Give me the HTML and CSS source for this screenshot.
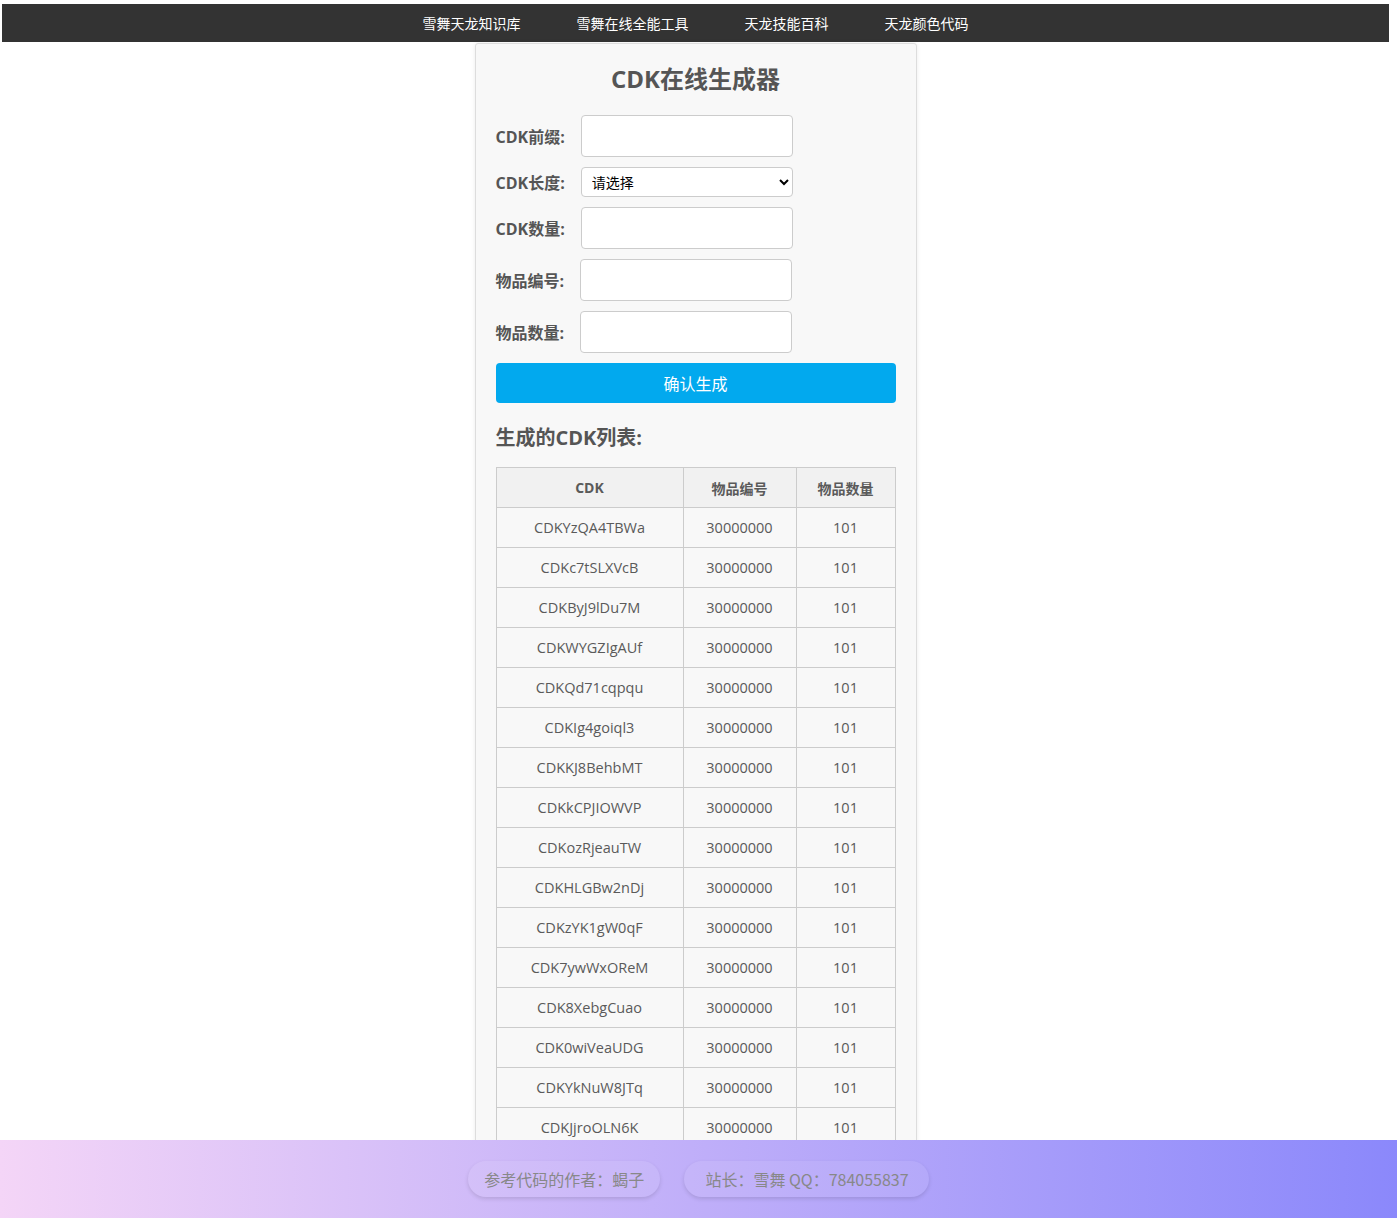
FILE: index.html
```html
<!DOCTYPE html>
<html lang="zh-CN">
<head>
    <meta charset="UTF-8">
    <title>CDK在线生成器</title>
    <link rel="stylesheet" href="styles.css">
</head>
<body>
  <nav class="topnav">
    <a href="#">雪舞天龙知识库</a>
    <a href="#">雪舞在线全能工具</a>
    <a href="#">天龙技能百科</a>
    <a href="#">天龙颜色代码</a>
  </nav>

  <div class="wrap">
    <div class="box">
      <h1>CDK在线生成器</h1>

      <form action="">
        <div class="row">
          <label for="prefix">CDK前缀:</label>
          <input type="text" id="prefix">
        </div>
        <div class="row">
          <label for="len">CDK长度:</label>
          <select id="len" class="sel">
            <option>请选择</option>
            <option>8</option>
            <option>10</option>
            <option>12</option>
          </select>
        </div>
        <div class="row">
          <label for="num">CDK数量:</label>
          <input type="text" id="num">
        </div>
        <div class="row">
          <label for="itemid">物品编号:</label>
          <input type="text" id="itemid">
        </div>
        <div class="row">
          <label for="itemnum">物品数量:</label>
          <input type="text" id="itemnum">
        </div>
        <button type="button" class="btn">确认生成</button>
      </form>

      <h2>生成的CDK列表:</h2>
      <table class="list">
        <thead>
          <tr><th class="c1">CDK</th><th class="c2">物品编号</th><th>物品数量</th></tr>
        </thead>
        <tbody>
          <tr><td>CDKYzQA4TBWa</td><td>30000000</td><td>101</td></tr>
          <tr><td>CDKc7tSLXVcB</td><td>30000000</td><td>101</td></tr>
          <tr><td>CDKByJ9lDu7M</td><td>30000000</td><td>101</td></tr>
          <tr><td>CDKWYGZIgAUf</td><td>30000000</td><td>101</td></tr>
          <tr><td>CDKQd71cqpqu</td><td>30000000</td><td>101</td></tr>
          <tr><td>CDKIg4goiql3</td><td>30000000</td><td>101</td></tr>
          <tr><td>CDKKJ8BehbMT</td><td>30000000</td><td>101</td></tr>
          <tr><td>CDKkCPJIOWVP</td><td>30000000</td><td>101</td></tr>
          <tr><td>CDKozRjeauTW</td><td>30000000</td><td>101</td></tr>
          <tr><td>CDKHLGBw2nDj</td><td>30000000</td><td>101</td></tr>
          <tr><td>CDKzYK1gW0qF</td><td>30000000</td><td>101</td></tr>
          <tr><td>CDK7ywWxOReM</td><td>30000000</td><td>101</td></tr>
          <tr><td>CDK8XebgCuao</td><td>30000000</td><td>101</td></tr>
          <tr><td>CDK0wiVeaUDG</td><td>30000000</td><td>101</td></tr>
          <tr><td>CDKYkNuW8JTq</td><td>30000000</td><td>101</td></tr>
          <tr><td>CDKJjroOLN6K</td><td>30000000</td><td>101</td></tr>
        </tbody>
      </table>
    </div>
  </div>

  <footer class="foot">
    <span class="pill">参考代码的作者：蝎子</span>
    <span class="pill pill-qq">站长：雪舞 QQ：784055837</span>
  </footer>
</body>
</html>
```

FILE: styles.css
```css
body{
  margin: 0;
  font-family: "Open Sans", "Noto Sans CJK SC", sans-serif;
  color: #555;
  background: #fff;
}
.topnav{
  margin: 4px 8px 0 2px;
  height: 38px;
  background-color: #333;
  display: flex;
  justify-content: center;
  align-items: center;
}
.topnav a{
  color: #fff;
  text-decoration: none;
  font-size: 14px;
  padding: 0 28px;
  font-family: "Noto Sans CJK SC", sans-serif;
}
.wrap{
  margin: 0 8px 0 2px;
}
.box{
  width: 400px;
  margin: 1px auto 0;
  padding: 19px 20px 100px;
  background-color: #f8f8f8;
  border: 1px solid #ddd;
  border-radius: 3px;
  box-shadow: 0 0 4px rgba(0,0,0,0.08);
}
h1{
  margin: 0 0 20px;
  font-size: 24px;
  line-height: 32px;
  text-align: center;
  color: #555;
}
.row{
  display: flex;
  align-items: center;
  gap: 16px;
  margin-bottom: 10px;
}
.row label{
  font-size: 16px;
  font-weight: bold;
  color: #555;
}
.row input{
  box-sizing: border-box;
  width: 212px;
  height: 42px;
  padding: 8px;
  border: 1px solid #ccc;
  border-radius: 4px;
  background: #fff;
}
.sel{
  box-sizing: border-box;
  width: 212px;
  height: 30px;
  padding: 0 6px;
  border: 1px solid #ccc;
  border-radius: 4px;
  background: #fff;
  font-size: 14px;
  color: #000;
  font-family: "Noto Sans CJK SC", sans-serif;
}
.btn{
  display: block;
  width: 100%;
  height: 40px;
  margin-top: 0;
  border: none;
  border-radius: 4px;
  background-color: #02a9ee;
  color: #fff;
  font-size: 16px;
  font-family: "Noto Sans CJK SC", sans-serif;
}
h2{
  margin: 22px 0 16px;
  font-size: 20px;
  line-height: 26px;
  color: #555;
}
.list{
  width: 400px;
  border-collapse: collapse;
  font-size: 14.5px;
}
.list th, .list td{
  height: 39px;
  padding: 0;
  border: 1px solid #ccc;
  text-align: center;
  color: #5a5a5a;
}
.list th{
  background-color: #f1f1f1;
  font-size: 14px;
}
.list .c1{
  width: 186px;
}
.list .c2{
  width: 112px;
}
.foot{
  position: fixed;
  left: 0;
  right: 0;
  bottom: 0;
  height: 78px;
  display: flex;
  justify-content: center;
  align-items: center;
  gap: 24px;
  background: linear-gradient(90deg, #f4d5f7, #8b88fb);
}
.pill{
  height: 36px;
  line-height: 36px;
  padding: 0 16px;
  border-radius: 18px;
  font-size: 16px;
  color: #888;
  background-color: rgba(255,255,255,0.08);
  box-shadow: 0 2px 4px rgba(0,0,0,0.12);
  font-family: "Noto Sans CJK SC", sans-serif;
}
.pill-qq{
  padding: 0 20px 0 21px;
}
```
